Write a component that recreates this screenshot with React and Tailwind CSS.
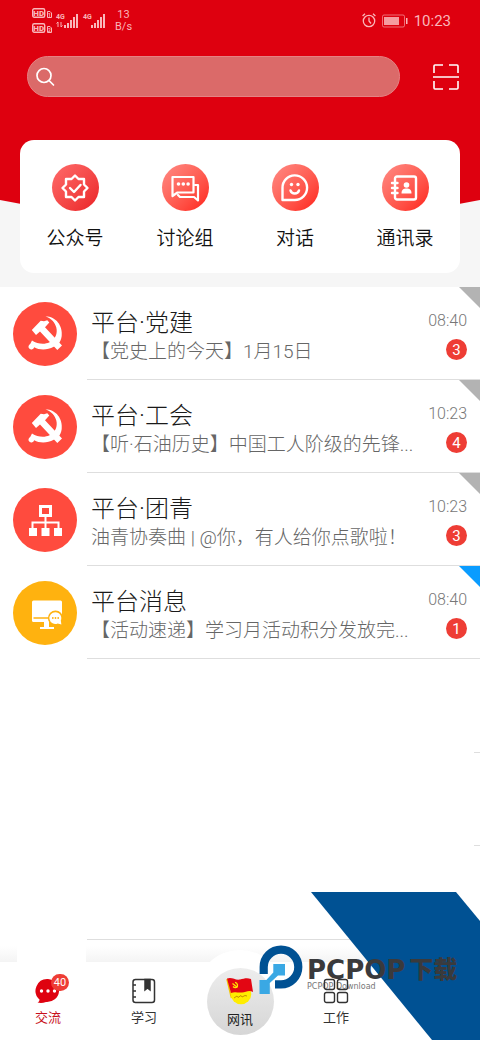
import React from "react";

function HdMark({ y, n }) {
  return (
    <g>
      <rect x=".7" y={y + 0.7} width="12" height="8.600" rx="1.500" fill="none" stroke="currentColor" strokeWidth="1.400" />
      <text x="6.700" y={y + 8} fontSize="8" fontWeight="900" textAnchor="middle" fill="currentColor">HD</text>
      <path d={`M15.500 ${y + 3.500}h2.500l1.500 1.500v4.500h-4z`} fill="none" stroke="currentColor" />
      <text x="17.500" y={y + 8.500} fontSize="5" fontWeight="700" textAnchor="middle" fill="currentColor">{n}</text>
    </g>
  );
}

function SignalBars({ x }) {
  return (
    <g fill="currentColor">
      <rect x={x} y="17" width="2" height="3" />
      <rect x={x + 3} y="15" width="2" height="5" />
      <rect x={x + 6} y="12" width="2" height="8" />
      <rect x={x + 9} y="9" width="2" height="11" />
      <rect x={x + 12} y="6" width="2" height="14" />
    </g>
  );
}

function StatusBar() {
  return (
    <div className="flex h-[41px] items-center justify-between pl-8 pr-[29px] text-[#f9b6ba]">
      <div className="flex items-center gap-2">
        <svg width="75" height="26" viewBox="0 0 75 26" aria-hidden="true">
          <HdMark y={0} n="1" />
          <HdMark y={15} n="2" />
          <text x="24" y="11" fontSize="7" fontWeight="700" fill="currentColor">4G</text>
          <path d="M26 14v5M24.500 15.500 26 14M29 14v5M29 19l1.500-1.500" stroke="currentColor" strokeWidth="1" />
          <SignalBars x={32} />
          <text x="51" y="11" fontSize="7" fontWeight="700" fill="currentColor">4G</text>
          <SignalBars x={59} />
        </svg>
        <div className="text-center text-[11px] leading-3">
          <div>13</div>
          <div>B/s</div>
        </div>
      </div>
      <div className="flex items-center gap-[6px]">
        <svg width="14" height="15" viewBox="0 0 14 15" fill="none" stroke="currentColor" strokeWidth="1.300" aria-hidden="true">
          <circle cx="7" cy="8" r="5.700" />
          <path d="M7 4.500V8l2 2.500M.6 3 3 .8M13.400 3 11 .8" />
        </svg>
        <svg width="26" height="14" viewBox="0 0 26 14" aria-hidden="true">
          <rect x=".5" y="1" width="22" height="12" rx="1.500" fill="none" stroke="currentColor" opacity=".6" />
          <rect x="2" y="3" width="15" height="8" fill="currentColor" opacity=".85" />
          <rect x="24" y="4" width="1.500" height="6" fill="currentColor" />
        </svg>
        <span className="text-[15px] leading-5">10:23</span>
      </div>
    </div>
  );
}

function OfficialIcon() {
  return (
    <svg width="30" height="30" viewBox="0 0 30 30" fill="none" stroke="#fff" strokeWidth="2.400" strokeLinejoin="round" strokeLinecap="round" aria-hidden="true">
      <path d="M15 2.500 18.500 6H24v5.500l3.500 3.500-3.500 3.500V24h-5.500L15 27.500 11.500 24H6v-5.500L2.500 15 6 11.500V6h5.500z" />
      <path d="m10 15 4 4 6.500-7" />
    </svg>
  );
}

function DiscussIcon() {
  return (
    <svg width="30" height="30" viewBox="0 0 30 30" fill="none" stroke="#fff" strokeWidth="2.200" strokeLinejoin="round" strokeLinecap="round" aria-hidden="true">
      <path d="M2.500 4h21v15.500H7.500L2.500 23z" />
      <path d="M25 12h3v15.500L24 24H10l-2-2" />
      <g fill="#fff" stroke="none">
        <circle cx="8.500" cy="11" r="1.800" />
        <circle cx="13.300" cy="11" r="1.800" />
        <circle cx="18.100" cy="11" r="1.800" />
      </g>
    </svg>
  );
}

function DialogIcon() {
  return (
    <svg width="30" height="30" viewBox="0 0 30 30" fill="none" stroke="#fff" strokeWidth="2.400" strokeLinejoin="round" strokeLinecap="round" aria-hidden="true">
      <path d="M2.500 27V15A12.300 12.300 0 1 1 14.800 27z" />
      <path d="M10.500 17.500a4.500 4.500 0 0 0 8.500 0" />
      <g fill="#fff" stroke="none">
        <circle cx="11.500" cy="11.500" r="1.700" />
        <circle cx="18" cy="11.500" r="1.700" />
      </g>
    </svg>
  );
}

function ContactsIcon() {
  return (
    <svg width="30" height="30" viewBox="0 0 30 30" fill="none" stroke="#fff" strokeWidth="2.400" strokeLinejoin="round" strokeLinecap="round" aria-hidden="true">
      <rect x="5" y="3.500" width="21" height="23" rx="2" />
      <path d="M2 10h5.500M2 15h5.500M2 20h5.500" />
      <g fill="#fff" stroke="none">
        <circle cx="16.500" cy="12" r="2.800" />
        <path d="M11.500 20.500c0-4 2-5 5-5s5 1 5 5z" />
      </g>
    </svg>
  );
}

const shortcuts = [
  { label: "公众号", Icon: OfficialIcon, tone: "from-[#ff6a6a] to-[#ea1c24]" },
  { label: "讨论组", Icon: DiscussIcon, tone: "from-[#ff8a85] to-[#ff120e]" },
  { label: "对话", Icon: DialogIcon, tone: "from-[#ff8a85] to-[#ff120e]" },
  { label: "通讯录", Icon: ContactsIcon, tone: "from-[#ff8a85] to-[#ff120e]" },
];

function PartyIcon() {
  return (
    <svg className="h-16 w-16" viewBox="0 0 64 64" fill="#fff" aria-hidden="true">
      <path d="M32.500 14.300C43 14.500 50 24 48.700 34c-.4 3-1.500 5.500-3 7.600l-5 3.200c-6.500 3.400-14 3.500-19.500.4a2.900 2.900 0 1 1-4-3.300l1.800-3.400c5.500 3.600 12.500 4.300 17.500 1.800 6-3 8.300-9 6.800-14.800-1.300-5-5-8.900-10.800-11.200z" />
      <path d="m18.800 28 8.900-9.300 3.300.6 3.300-1 2 2.300-4.300 4.600L49 43.600 44.300 48 27 29.500l-4 3.500z" />
    </svg>
  );
}

function OrgIcon() {
  return (
    <svg className="h-16 w-16" viewBox="0 0 64 64" fill="none" stroke="#fff" aria-hidden="true">
      <rect x="27.500" y="18.500" width="10" height="9" strokeWidth="3" />
      <path d="M32.500 29v12M19.500 41v-6.500h26V41" strokeWidth="2" />
      <path d="M16 40h8v8h-8zM28.500 40h8v8h-8zM41 40h8v8h-8z" fill="#fff" stroke="none" />
    </svg>
  );
}

function MonitorIcon() {
  return (
    <svg className="h-16 w-16" viewBox="0 0 64 64" aria-hidden="true">
      <rect x="19" y="19.500" width="30" height="21.500" rx="1.500" fill="#fff" />
      <path d="M20.500 37h27" stroke="#ffb20f" strokeWidth="1.300" />
      <path d="M31 41h5v5h5v2H27v-2h4z" fill="#fff" />
      <circle cx="42.500" cy="37" r="7.600" fill="#ffb20f" />
      <path d="M42.500 31.200a5.900 5.900 0 0 1 5.300 8.300l.6 4-3.700-1a5.900 5.900 0 1 1-2.200-11.300z" fill="#fff" />
      <g fill="#ffb20f">
        <circle cx="39.800" cy="37" r=".9" />
        <circle cx="42.500" cy="37" r=".9" />
        <circle cx="45.200" cy="37" r=".9" />
      </g>
    </svg>
  );
}

const messages = [
  { title: "平台·党建", text: "【党史上的今天】1月15日", time: "08:40", count: 3, Icon: PartyIcon, tone: "bg-[#ff4b3e]", corner: "bg-[#b3b3b3]" },
  { title: "平台·工会", text: "【听·石油历史】中国工人阶级的先锋...", time: "10:23", count: 4, Icon: PartyIcon, tone: "bg-[#ff4b3e]", corner: "bg-[#b3b3b3]" },
  { title: "平台·团青", text: "油青协奏曲 | @你，有人给你点歌啦！", time: "10:23", count: 3, Icon: OrgIcon, tone: "bg-[#ff4b3e]", corner: "bg-[#b3b3b3]" },
  { title: "平台消息", text: "【活动速递】学习月活动积分发放完...", time: "08:40", count: 1, Icon: MonitorIcon, tone: "bg-[#ffb20f]", corner: "bg-[#0a9cff]" },
];

function MessageRow({ title, text, time, count, Icon, tone, corner }) {
  return (
    <li>
      <a href="#" className="relative flex items-start pl-[13px]">
        <span className={`mt-[15px] shrink-0 overflow-hidden rounded-full ${tone}`}>
          <Icon />
        </span>
        <span className="ml-[10px] flex min-w-0 flex-1 items-start border-b border-[#dedede] pb-3 pl-1 pr-[13px] pt-[22px]">
          <span className="min-w-0 flex-1">
            <span className="block text-2xl font-light leading-7 text-[#1a1a1a]">{title}</span>
            <span className="block whitespace-nowrap text-[19px] font-light leading-[30px] text-[#666]">{text}</span>
          </span>
          <span className="flex shrink-0 flex-col items-end">
            <span className="text-base font-light leading-6 text-[#777]">{time}</span>
            <span className="mt-[6px] flex h-[21px] w-[21px] items-center justify-center rounded-full bg-[#ee3d35] text-[15px] leading-5 text-white">{count}</span>
          </span>
        </span>
        <span className={`absolute right-0 top-0 h-[21px] w-[21px] [clip-path:polygon(0_0,100%_0,100%_100%)] ${corner}`} />
      </a>
    </li>
  );
}

function ChatIcon() {
  return (
    <svg width="26" height="26" viewBox="0 0 26 26" aria-hidden="true">
      <path d="M13 1a12 11.500 0 1 1-2 23c-3 1.200-6 1.200-8.500.6 1.500-.8 2-1.800 2-3.200A11.700 11.700 0 0 1 13 1z" fill="#df0210" />
      <g fill="#fff">
        <circle cx="6.500" cy="13" r="1.700" />
        <circle cx="13" cy="13" r="1.700" />
        <circle cx="19.500" cy="13" r="1.700" />
      </g>
    </svg>
  );
}

function BookIcon() {
  return (
    <svg width="26" height="26" viewBox="0 0 26 26" fill="none" stroke="#333" strokeWidth="1.500" aria-hidden="true">
      <rect x="2" y="1.500" width="21.500" height="23" rx="2.500" />
      <path d="M2 7h3M2 13h3M2 19h3" />
      <path d="M14 1.500h5V12l-2.500-2L14 12z" fill="#333" />
    </svg>
  );
}

function GridIcon() {
  return (
    <svg width="26" height="26" viewBox="0 0 26 26" fill="none" stroke="#333" strokeWidth="1.400" aria-hidden="true">
      <rect x="1.500" y="1.500" width="10" height="10" rx="2" />
      <rect x="14.500" y="1.500" width="10" height="10" rx="2" />
      <rect x="1.500" y="14.500" width="10" height="10" rx="2" />
      <rect x="14.500" y="14.500" width="10" height="10" rx="2" />
    </svg>
  );
}

function FlagIcon() {
  return (
    <svg width="30" height="28" viewBox="0 0 30 28" aria-hidden="true">
      <path d="M2 2 6.500 21" stroke="#f2c500" strokeWidth="1.600" />
      <circle cx="16" cy="17" r="10.300" fill="#ffed00" />
      <path d="M2 1.500c5-2 8 2 13 1 4-1 7-2 11-.5L28 15c-4-2.500-7 0-11 .5-5 .5-7-1-11 .5z" fill="#e30613" />
      <path d="M8 9.500c2 2 5 1 4.500-1.500-.2-1.500-1.200-2.500-2.500-2.700M7.500 6.500l5 4" fill="none" stroke="#ffe600" strokeWidth="1.300" />
      <path d="m9 21 3-2 1 1.500 3-2 1 1.500 3-1.500 2 .5" fill="none" stroke="#c89100" strokeWidth="1" />
    </svg>
  );
}

function BottomNav() {
  const item = "flex flex-col items-center pt-4 text-[13px] leading-[22px]";
  return (
    <nav className="relative grid h-[78px] grid-cols-5 bg-white">
      <div className="absolute inset-x-0 bottom-full h-4 bg-linear-to-t from-[#f4f4f4] to-white/0" />
      <div className="absolute bottom-full left-[17px] h-4 w-[69px] bg-white" />
      <a href="#" className={`${item} text-[#c8101c]`}>
        <span className="relative">
          <ChatIcon />
          <span className="absolute -right-2 -top-1 flex h-[17px] w-[18px] items-center justify-center rounded-full bg-[#ee3d35] text-[11px] text-white">40</span>
        </span>
        <span className="pt-[3px]">交流</span>
      </a>
      <a href="#" className={`${item} text-[#333]`}>
        <BookIcon />
        <span className="pt-[3px]">学习</span>
      </a>
      <div className="flex justify-center">
        <div className="relative -mt-3 flex h-[90px] w-[88px] shrink-0 justify-center rounded-t-full bg-white pt-[18px]">
          <a href="#" className="flex h-[67px] w-[67px] flex-col items-center rounded-full bg-linear-to-b from-[#ededed] to-[#d6d6d6] pt-[9px] text-[13px] leading-5 text-[#222]">
            <FlagIcon />
            <span className="pt-[5px]">网讯</span>
          </a>
        </div>
      </div>
      <a href="#" className={`${item} relative z-20 text-[#333]`}>
        <GridIcon />
        <span className="pt-[3px]">工作</span>
      </a>
    </nav>
  );
}

function Watermark() {
  return (
    <div className="pointer-events-none absolute bottom-0 right-0 z-10 h-[148px] w-[221px]">
      <div className="ml-auto h-[148px] w-[169px] bg-[#005193] [clip-path:polygon(0_0,145px_0,100%_29px,100%_100%,121px_100%)]" />
      <div className="absolute left-0 top-[53px] flex gap-1">
        <svg className="shrink-0" width="44" height="50" viewBox="0 0 44 50" aria-hidden="true">
          <path d="M4.700 29V22A17.300 17.300 0 1 1 22 39.300H16" fill="none" stroke="#005193" strokeWidth="8.200" />
          <path d="M14.300 19H26v11.500h-7L10.800 38v11H.5V35h6.800l7-7.500z" fill="#3aa8e4" />
        </svg>
        <div className="whitespace-nowrap pt-[13px] text-[#3a3a3c]">
          <div className="flex items-center font-bold leading-6">
            <span className="font-['DejaVu_Sans'] text-[26px]">PCPOP</span>
            <span className="pl-1 text-2xl leading-6 font-black">下载</span>
          </div>
          <div className="font-['DejaVu_Sans'] text-[8px] leading-[10px] text-[#777]">PCPOP Download</div>
        </div>
      </div>
    </div>
  );
}

export default function App() {
  return (
    <div className="relative flex min-h-screen flex-col overflow-hidden bg-white font-['Roboto','Noto_Sans_CJK_SC',sans-serif]">
      <header className="relative bg-[#f6f6f6] pb-[14px]">
        <div className="absolute inset-x-0 top-0 h-[245px] bg-[#de000f] [clip-path:polygon(0_0,100%_0,100%_200px,50%_100%,0_200px)]" />
        <div className="relative">
          <StatusBar />
          <div className="flex items-center gap-8 pb-[43px] pl-[27px] pr-5 pt-[15px]">
            <label className="flex h-[41px] min-w-0 flex-1 items-center rounded-full border border-[#e58283] bg-[#db6a69] pl-2">
              <svg width="20" height="20" viewBox="0 0 20 20" fill="none" stroke="#fff" strokeWidth="1.700" strokeLinecap="round" aria-hidden="true">
                <circle cx="8" cy="8.500" r="7" />
                <path d="m13 13.500 4.500 4.500" />
              </svg>
              <input type="search" aria-label="搜索" className="min-w-0 flex-1 bg-transparent px-2 text-base text-white outline-none" />
            </label>
            <button type="button" aria-label="扫一扫">
              <svg width="28" height="28" viewBox="0 0 28 28" fill="none" stroke="#fff" strokeWidth="1.600" aria-hidden="true">
                <path d="M2 10V3q0-1 1-1h8M17 2h8q1 0 1 1v7M2 18v7q0 1 1 1h8M17 26h8q1 0 1-1v-7M1 14h26" />
              </svg>
            </button>
          </div>
          <div className="mx-5 grid grid-cols-4 rounded-[14px] bg-white pb-5 pt-6">
            {shortcuts.map(({ label, Icon, tone }) => (
              <a key={label} href="#" className="flex flex-col items-center gap-[14px]">
                <span className={`flex h-[47px] w-[47px] items-center justify-center rounded-full bg-linear-to-br ${tone}`}>
                  <Icon />
                </span>
                <span className="text-[19px] font-[350] leading-7 text-[#111]">{label}</span>
              </a>
            ))}
          </div>
        </div>
      </header>
      <main className="flex-1">
        <ul>
          {messages.map((m) => (
            <MessageRow key={m.title} {...m} />
          ))}
        </ul>
        <div className="ml-auto h-[94px] w-[6px] border-b border-[#dedede]" />
        <div className="ml-auto h-[93px] w-[6px] border-b border-[#dedede]" />
        <div className="ml-[87px] h-[94px] border-b border-[#dedede]" />
      </main>
      <BottomNav />
      <Watermark />
    </div>
  );
}
